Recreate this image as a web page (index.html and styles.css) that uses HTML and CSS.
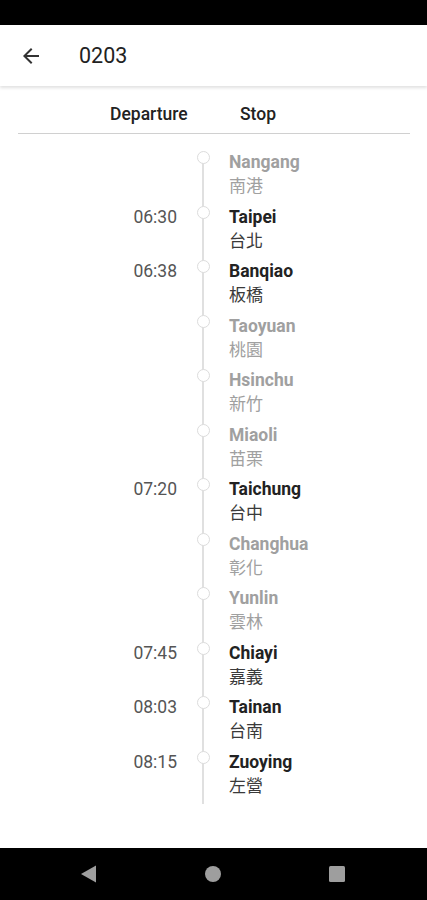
FILE: index.html
```html
<!DOCTYPE html>
<html>
<head>
<meta charset="utf-8">
<link rel="stylesheet" href="styles.css">
</head>
<body>
<div class="screen">
  <div class="statusbar"></div>
  <div class="appbar">
    <svg class="back" width="24" height="24" viewBox="0 0 24 24"><path d="M20 11H7.83l5.59-5.59L12 4l-8 8 8 8 1.41-1.41L7.83 13H20v-2z" fill="#333"/></svg>
    <div class="title">0203</div>
  </div>
  <div class="content">
    <div class="thead">
      <div class="th-dep">Departure</div>
      <div class="th-stop">Stop</div>
    </div>
    <div class="list">
      <div class="row first pass"><div class="time"></div><div class="tl"><span class="dot"></span></div><div class="name"><div class="en">Nangang</div><div class="zh">南港</div></div></div>
      <div class="row"><div class="time">06:30</div><div class="tl"><span class="dot"></span></div><div class="name"><div class="en">Taipei</div><div class="zh">台北</div></div></div>
      <div class="row"><div class="time">06:38</div><div class="tl"><span class="dot"></span></div><div class="name"><div class="en">Banqiao</div><div class="zh">板橋</div></div></div>
      <div class="row pass"><div class="time"></div><div class="tl"><span class="dot"></span></div><div class="name"><div class="en">Taoyuan</div><div class="zh">桃園</div></div></div>
      <div class="row pass"><div class="time"></div><div class="tl"><span class="dot"></span></div><div class="name"><div class="en">Hsinchu</div><div class="zh">新竹</div></div></div>
      <div class="row pass"><div class="time"></div><div class="tl"><span class="dot"></span></div><div class="name"><div class="en">Miaoli</div><div class="zh">苗栗</div></div></div>
      <div class="row"><div class="time">07:20</div><div class="tl"><span class="dot"></span></div><div class="name"><div class="en">Taichung</div><div class="zh">台中</div></div></div>
      <div class="row pass"><div class="time"></div><div class="tl"><span class="dot"></span></div><div class="name"><div class="en">Changhua</div><div class="zh">彰化</div></div></div>
      <div class="row pass"><div class="time"></div><div class="tl"><span class="dot"></span></div><div class="name"><div class="en">Yunlin</div><div class="zh">雲林</div></div></div>
      <div class="row"><div class="time">07:45</div><div class="tl"><span class="dot"></span></div><div class="name"><div class="en">Chiayi</div><div class="zh">嘉義</div></div></div>
      <div class="row"><div class="time">08:03</div><div class="tl"><span class="dot"></span></div><div class="name"><div class="en">Tainan</div><div class="zh">台南</div></div></div>
      <div class="row"><div class="time">08:15</div><div class="tl"><span class="dot"></span></div><div class="name"><div class="en">Zuoying</div><div class="zh">左營</div></div></div>
    </div>
  </div>
  <div class="navbar">
    <svg width="20" height="20" viewBox="0 0 20 20"><path d="M17 1.5 L17 18.5 L2 10 Z" fill="#9e9e9e"/></svg>
    <svg width="20" height="20" viewBox="0 0 20 20"><circle cx="10" cy="10" r="8" fill="#9e9e9e"/></svg>
    <svg width="20" height="20" viewBox="0 0 20 20"><rect x="2" y="2" width="16" height="16" rx="1.5" fill="#9e9e9e"/></svg>
  </div>
</div>
</body>
</html>
```

FILE: styles.css
```css
html, body {
  margin: 0;
  padding: 0;
  background: #fff;
}
body {
  font-family: Roboto, "Noto Sans CJK TC", sans-serif;
}
.screen {
  width: 427px;
  height: 900px;
  display: flex;
  flex-direction: column;
  overflow: hidden;
}
.statusbar {
  height: 25px;
  background: #000;
  flex: none;
}
.appbar {
  height: 61px;
  flex: none;
  display: flex;
  align-items: center;
  background: #fff;
  box-shadow: 0 2px 3px rgba(0,0,0,0.12);
  position: relative;
  z-index: 1;
}
.back {
  margin-left: 19px;
  width: 24px;
  height: 24px;
}
.title {
  margin-left: 36px;
  font-size: 21.5px;
  color: #222;
}
.content {
  flex: 1;
  display: flex;
  flex-direction: column;
}
.thead {
  box-sizing: border-box;
  margin: 0 17px 0 18px;
  height: 48px;
  padding-top: 8px;
  display: flex;
  align-items: center;
  border-bottom: 1px solid #d0d0d0;
  font-size: 17.5px;
  font-weight: 500;
  color: #222;
}
.th-dep {
  margin-left: 92px;
  width: 130px;
}
.list {
  padding-top: 16px;
  display: flex;
  flex-direction: column;
}
.row {
  display: grid;
  grid-template-columns: 177px 52px 1fr;
  height: 54.5px;
}
.time {
  text-align: right;
  font-size: 17.5px;
  line-height: 24px;
  color: #555;
}
.tl {
  position: relative;
}
.tl::before {
  content: "";
  position: absolute;
  left: 25px;
  top: 0;
  bottom: 0;
  width: 1.5px;
  background: #e0e0e0;
}
.row.first .tl::before {
  top: 9px;
}
.dot {
  position: absolute;
  left: 19.5px;
  top: 1px;
  width: 11px;
  height: 11px;
  border: 1.3px solid #dcdcdc;
  border-radius: 50%;
  background: #fff;
}
.name {
  line-height: 24px;
}
.en {
  font-size: 17.5px;
  font-weight: 700;
  color: #222;
}
.zh {
  font-size: 17px;
  line-height: 22px;
  color: #3a3a3a;
  font-family: "Noto Sans CJK TC", sans-serif;
}
.pass .en,
.pass .zh {
  color: #a0a0a0;
}
.navbar {
  height: 52px;
  flex: none;
  background: #000;
  display: flex;
  align-items: center;
  justify-content: space-between;
  padding: 0 80px 0 79px;
}
```
